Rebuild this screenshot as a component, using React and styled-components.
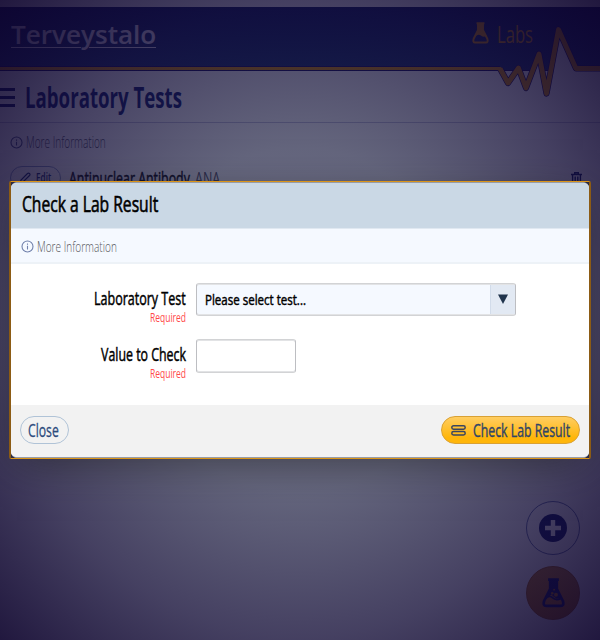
import React, { useLayoutEffect, useRef, useState } from "react";
import styled, { createGlobalStyle } from "styled-components";

const GlobalStyle = createGlobalStyle`
  * { box-sizing: border-box; }
  body { margin: 0; font-family: "Open Sans", "Liberation Sans", sans-serif; overflow: hidden; }
`;

/* ---------- condensed text: squeezes a line to a given width ---------- */
const TextBox = styled.span`
  display: block;
  flex: none;
  width: ${(p) => p.$w}px;
  height: ${(p) => p.$lh}px;
  line-height: ${(p) => p.$lh}px;
  font-size: ${(p) => p.$size}px;
  font-weight: ${(p) => p.$weight || 400};
  -webkit-text-stroke: ${(p) => p.$stroke || 0}px currentColor;
  color: ${(p) => p.$color || "#000"};
  white-space: nowrap;
`;
const Squeezed = styled.span`
  display: inline-block;
  transform-origin: 0 50%;
`;
function Condensed({ w, lh = 20, size, weight, stroke, color, children }) {
  const ref = useRef(null);
  const [scale, setScale] = useState(1);
  useLayoutEffect(() => {
    setScale(w / ref.current.offsetWidth);
  }, [w, children]);
  return (
    <TextBox $w={w} $lh={lh} $size={size} $weight={weight} $stroke={stroke} $color={color}>
      <Squeezed ref={ref} style={{ transform: `scaleX(${scale})` }}>{children}</Squeezed>
    </TextBox>
  );
}

/* ---------- page ---------- */
const Screen = styled.div`
  position: relative;
  width: 600px;
  height: 640px;
  overflow: hidden;
  background: #fff;
`;
const Header = styled.header`
  position: relative;
  display: flex;
  justify-content: space-between;
  margin-top: 7px;
  height: 64px;
  padding: 0 67px 0 11px;
  background: linear-gradient(#06145c, #16306c);
  border-bottom: 1px solid #10085c;
`;
const Logo = styled.div`
  padding-top: 13px;
`;
const LogoRule = styled.div`
  display: flex;
  gap: 8px;
  margin-top: -1px;
  &::before, &::after { content: ""; height: 1px; background: #f4f2ff; }
  &::before { width: 70px; }
  &::after { width: 67px; }
`;
const Section = styled.div`
  display: flex;
  gap: 8px;
  padding-top: 15px;
  align-items: flex-start;
`;
const Pulse = styled.svg`
  position: absolute;
  left: 0;
  top: 0;
`;
const TitleBar = styled.div`
  display: flex;
  align-items: center;
  gap: 10px;
  height: 52px;
  border-bottom: 1px solid #c3c3dc;
`;
const Burger = styled.div`
  width: 15px;
  height: 19px;
  margin-top: 2px;
  border-top: 3px solid #0a1460;
  border-bottom: 3px solid #0a1460;
  padding: 5px 0;
  &::before { content: ""; display: block; height: 3px; background: #0a1460; }
`;
const InfoLine = styled.div`
  display: flex;
  align-items: center;
  gap: 3px;
  height: ${(p) => p.$h}px;
  padding-left: 10px;
`;
const TestRow = styled.div`
  display: flex;
  align-items: center;
  height: 28px;
  margin-top: 3px;
  padding: 0 18px 0 10px;
`;
const EditPill = styled.div`
  display: flex;
  align-items: center;
  gap: 5px;
  width: 51px;
  height: 24px;
  margin-right: 8px;
  padding-left: 8px;
  border: 1px solid #8b9cc8;
  border-radius: 12px;
`;
const Spacer = styled.div`
  flex: 1;
`;
const Gap = styled.div`
  width: 5px;
`;
const Fabs = styled.div`
  position: absolute;
  right: 20px;
  bottom: 20px;
  display: flex;
  flex-direction: column;
  gap: 11px;
`;
const Fab = styled.div`
  display: flex;
  align-items: center;
  justify-content: center;
  width: 54px;
  height: 54px;
  border-radius: 50%;
  border: 1px solid ${(p) => (p.$gold ? "#a86000" : "#6070a8")};
  background: ${(p) => (p.$gold ? "linear-gradient(#c88420, #c07000)" : "transparent")};
`;
const Backdrop = styled.div`
  position: absolute;
  inset: 0;
  background: radial-gradient(ellipse farthest-corner at 50% 50%,
    rgba(22, 24, 62, 0.62) 0%, rgba(20, 22, 58, 0.66) 38%,
    rgba(19, 13, 55, 0.79) 70%, rgba(14, 4, 46, 0.92) 100%);
`;

/* ---------- dialog ---------- */
const Frame = styled.div`
  position: absolute;
  left: 9px;
  top: 181px;
  width: 582px;
  height: 278px;
  border: solid;
  border-width: 1px 2px;
  border-color: #dc9518 #8c5b14;
  border-radius: 2px;
  background: #2b2a42;
  box-shadow: 0 10px 40px -8px rgba(30, 30, 30, 0.6);
`;
const Dialog = styled.section`
  display: flex;
  flex-direction: column;
  height: 276px;
  border: solid;
  border-width: 1px 0;
  border-color: #969ca8;
  border-radius: 6px;
  overflow: hidden;
  background: #fff;
`;
const DialogHead = styled.div`
  height: 45px;
  padding: 9px 0 0 11px;
  background: #cad8e5;
`;
const DialogInfo = styled.div`
  height: 36px;
  background: #f5f9ff;
  border-top: 1px solid #e0e8f1;
  border-bottom: 2px solid #edf2f7;
`;
const DialogBody = styled.div`
  display: flex;
  flex-direction: column;
  height: 141px;
  padding-top: 19px;
`;
const Field = styled.div`
  display: grid;
  grid-template-columns: 175px auto;
  column-gap: 10px;
  height: 56px;
  align-items: start;
`;
const Label = styled.div`
  display: flex;
  flex-direction: column;
  align-items: flex-end;
  padding-top: 5px;
`;
const Control = styled.div`
  display: flex;
  align-items: stretch;
  width: ${(p) => p.$w}px;
  height: ${(p) => p.$h}px;
  border: 1px solid #bdbec2;
  border-top-color: #d2d3d5;
  border-bottom-color: #d2d3d5;
  border-radius: 3px;
  background: ${(p) => p.$bg};
  overflow: hidden;
  box-shadow: inset 0 1px #e2e3e5, inset 0 -1px #e2e3e5;
`;
const Value = styled.div`
  flex: 1;
  display: flex;
  align-items: center;
  padding: 0 0 0 8px;
`;
const ArrowBox = styled.div`
  display: flex;
  align-items: center;
  justify-content: center;
  width: 25px;
  padding-bottom: 1px;
  margin: 1px 0;
  border-left: 1px solid #d2dcea;
  background: #e2e9f3;
`;
const DialogFoot = styled.div`
  display: flex;
  justify-content: space-between;
  height: 52px;
  padding: 11px 9px 0;
  background: #f2f2f2;
`;
const Button = styled.button`
  display: flex;
  align-items: center;
  gap: 7px;
  width: ${(p) => p.$w}px;
  height: 28px;
  padding: 0 0 0 ${(p) => (p.$gold ? 9 : 7)}px;
  border-radius: 14px;
  font-family: inherit;
  border: 1px solid ${(p) => (p.$gold ? "#d9a134" : "#b0c3d7")};
  background: ${(p) => (p.$gold ? "linear-gradient(#ffcd61, #ffb60a 80%)" : "transparent")};
`;

const InfoIcon = ({ color }) => (
  <svg width="13" height="13" viewBox="0 0 13 13" fill="none" stroke={color}>
    <circle cx="6.5" cy="6.5" r="5.5" strokeWidth="1.1" />
    <path d="M6.5 5.8V9.4M6.5 3.6V4.7" strokeWidth="1.1" />
  </svg>
);
const Flask = ({ w, h, color, bubbles }) => (
  <svg width={w} height={h} viewBox="0 0 22 29" fill="none">
    {!bubbles && <path d="M7 2H15V11L19 18Q15 21 12 18Q8 15 4 19L7 11Z" fill={color} />}
    <path d="M5.8 1.6H16.2M7.8 2V10.5L2 22Q0.5 27 4 27H18Q21.5 27 20 22L14.2 10.5V2" stroke={color} strokeWidth="2.6" strokeLinejoin="round" />
    {bubbles && (
      <>
        <path d="M8 2H14V10L18 19L14 20L11 18L9 16L5 19L8 11Z" fill={color} />
        <path d="M3.5 20Q7 16 10 19T18 20" stroke={color} strokeWidth="1.7" />
        <g fill="#c07800"><circle cx="11.6" cy="11.3" r=".9" /><circle cx="9.8" cy="14.8" r="1.2" /><circle cx="13.4" cy="16.2" r="1.9" /></g>
      </>
    )}
  </svg>
);
const Pencil = () => (
  <svg width="12" height="12" viewBox="0 0 12 12" fill="none" stroke="#172a70" strokeWidth="1.2">
    <path d="M1 11L2 8L8.5 1.5Q9.5 .6 10.5 1.5T10.5 3.5L4 10Z" />
  </svg>
);
const Trash = () => (
  <svg width="11" height="13" viewBox="0 0 11 13" fill="none" stroke="#0a1460" strokeWidth="1.4">
    <path d="M0 2.5H11M3.7 2V.8H7.3V2M1.6 3V12.2H9.4V3M4.2 4.5V11M6.8 4.5V11" />
  </svg>
);

const pulse = "M500 61.5L508 76L518.5 61L526 81L539 47L546.5 86.5L558.5 22.5L576 61.5H601";

export default function App() {
  return (
    <>
      <GlobalStyle />
      <Screen>
        <Header>
          <Logo>
            <Condensed w={145} lh={28} size={25} weight={600} color="#ece8fa">Terveystalo</Condensed>
            <LogoRule />
          </Logo>
          <Section>
            <Flask w={17} h={22} color="#dc9000" />
            <Condensed w={36} lh={24} size={24} color="#dc9000">Labs</Condensed>
          </Section>
          <Pulse width="600" height="92" viewBox="0 0 600 92" fill="none" strokeLinejoin="round">
            <path d={`${pulse}V64H500Z`} fill="#fff" />
            <path d="M0 61.5H500" stroke="#10085c" strokeWidth="5" />
            <path d={pulse} stroke="#10085c" strokeWidth="6.2" />
            <path d="M0 61.5H501M575 61.5H600" stroke="#dc9000" strokeWidth="3" />
            <path d={pulse} stroke="#dc9000" strokeWidth="4.8" />
          </Pulse>
        </Header>
        <TitleBar>
          <Burger />
          <Condensed w={157} lh={42} size={29} weight={700} color="#0c1a6c">Laboratory Tests</Condensed>
        </TitleBar>
        <InfoLine $h={38}>
          <InfoIcon color="#4a5280" />
          <Condensed w={80} size={15.5} weight={300} color="#505060">More Information</Condensed>
        </InfoLine>
        <TestRow>
          <EditPill>
            <Pencil />
            <Condensed w={15} size={12} weight={600} color="#172a70">Edit</Condensed>
          </EditPill>
          <Condensed w={121} lh={22} size={19} stroke={0.5}>Antinuclear Antibody</Condensed>
          <Gap />
          <Condensed w={25} lh={22} size={19} color="#50505f">ANA</Condensed>
          <Spacer />
          <Trash />
        </TestRow>
        <Fabs>
          <Fab>
            <svg width="28" height="28" viewBox="0 0 28 28">
              <circle cx="14" cy="14" r="14" fill="#0a1460" />
              <path d="M14 6V22M6 14H22" stroke="#fff" strokeWidth="4.4" />
            </svg>
          </Fab>
          <Fab $gold><Flask w={23} h={30} color="#0a1460" bubbles /></Fab>
        </Fabs>
        <Backdrop />
        <Frame>
          <Dialog role="dialog">
            <DialogHead>
              <Condensed w={136} lh={23} size={21.5} stroke={0.6}>Check a Lab Result</Condensed>
            </DialogHead>
            <DialogInfo>
              <InfoLine $h={34}>
                <InfoIcon color="#7080ab" />
                <Condensed w={80} lh={20} size={15} weight={300} color="#55585c">More Information</Condensed>
              </InfoLine>
            </DialogInfo>
            <DialogBody>
              <Field>
                <Label>
                  <Condensed w={92} size={18.5} stroke={0.5}>Laboratory Test</Condensed>
                  <Condensed w={36} lh={19} size={12.5} color="#ff4a4a">Required</Condensed>
                </Label>
                <Control $w={320} $h={33} $bg="#f5f9ff">
                  <Value><Condensed w={101} size={14.5} stroke={0.45}>Please select test...</Condensed></Value>
                  <ArrowBox>
                    <svg width="10" height="10" viewBox="0 0 10 10"><path d="M0 .5H10L5 10Z" fill="#20344c" /></svg>
                  </ArrowBox>
                </Control>
              </Field>
              <Field>
                <Label>
                  <Condensed w={85} size={18.5} stroke={0.5}>Value to Check</Condensed>
                  <Condensed w={36} lh={19} size={12.5} color="#ff4a4a">Required</Condensed>
                </Label>
                <Control $w={100} $h={34} $bg="#fff" />
              </Field>
            </DialogBody>
            <DialogFoot>
              <Button $w={49}>
                <Condensed w={31} size={18.5} stroke={0.3} color="#2c4a7c">Close</Condensed>
              </Button>
              <Button $w={139} $gold>
                <svg width="15" height="11" viewBox="0 0 15 11" fill="none" stroke="#3a4560" strokeWidth="1.5">
                  <rect x=".8" y=".8" width="13.4" height="3.4" rx="1.7" />
                  <rect x=".8" y="6.6" width="13.4" height="3.4" rx="1.7" />
                </svg>
                <Condensed w={97} size={18.5} stroke={0.4} color="#2f4468">Check Lab Result</Condensed>
              </Button>
            </DialogFoot>
          </Dialog>
        </Frame>
      </Screen>
    </>
  );
}
